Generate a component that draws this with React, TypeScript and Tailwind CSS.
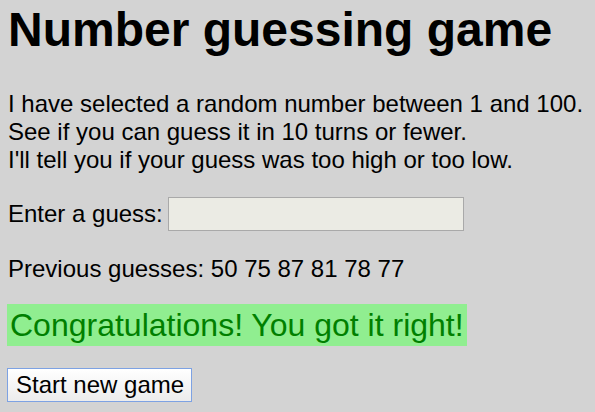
export default function App() {
  const guesses = [50, 75, 87, 81, 78, 77];

  return (
    <div className="min-h-[412px] bg-[#d3d3d3] px-2 pt-[6px] font-['Liberation_Sans',Arial,sans-serif] text-black">
      <h1 className="text-[48px] font-bold leading-[48px]">Number guessing game</h1>

      <p className="mt-[36px] text-[24px] leading-[28px]">
        I have selected a random number between 1 and 100.
        <br />
        See if you can guess it in 10 turns or fewer.
        <br />
        I'll tell you if your guess was too high or too low.
      </p>

      <div className="mt-[23px] flex items-center text-[24px] leading-[28px]">
        <label htmlFor="guessField">Enter a guess:</label>
        <input
          id="guessField"
          type="text"
          disabled
          className="ml-[5px] h-[34px] w-[296px] border border-[#a9a9a9] bg-[#ebebe4]"
        />
      </div>

      <p className="mt-[24px] text-[24px] leading-[28px]">Previous guesses: {guesses.join(' ')}</p>

      <div className="mt-[21px]">
        <p className="-ml-px inline-block bg-[#90ee90] px-[3px] py-[3px] text-[32px] leading-[36px] text-[#008000]">
          Congratulations! You got it right!
        </p>
      </div>

      <div className="mt-[22px]">
        <button className="-ml-px h-[34px] border border-[#7da2e3] bg-gradient-to-b from-white to-[#ececec] pl-[8px] pr-[7px] text-[24px] leading-[28px]">
          Start new game
        </button>
      </div>
    </div>
  );
}
